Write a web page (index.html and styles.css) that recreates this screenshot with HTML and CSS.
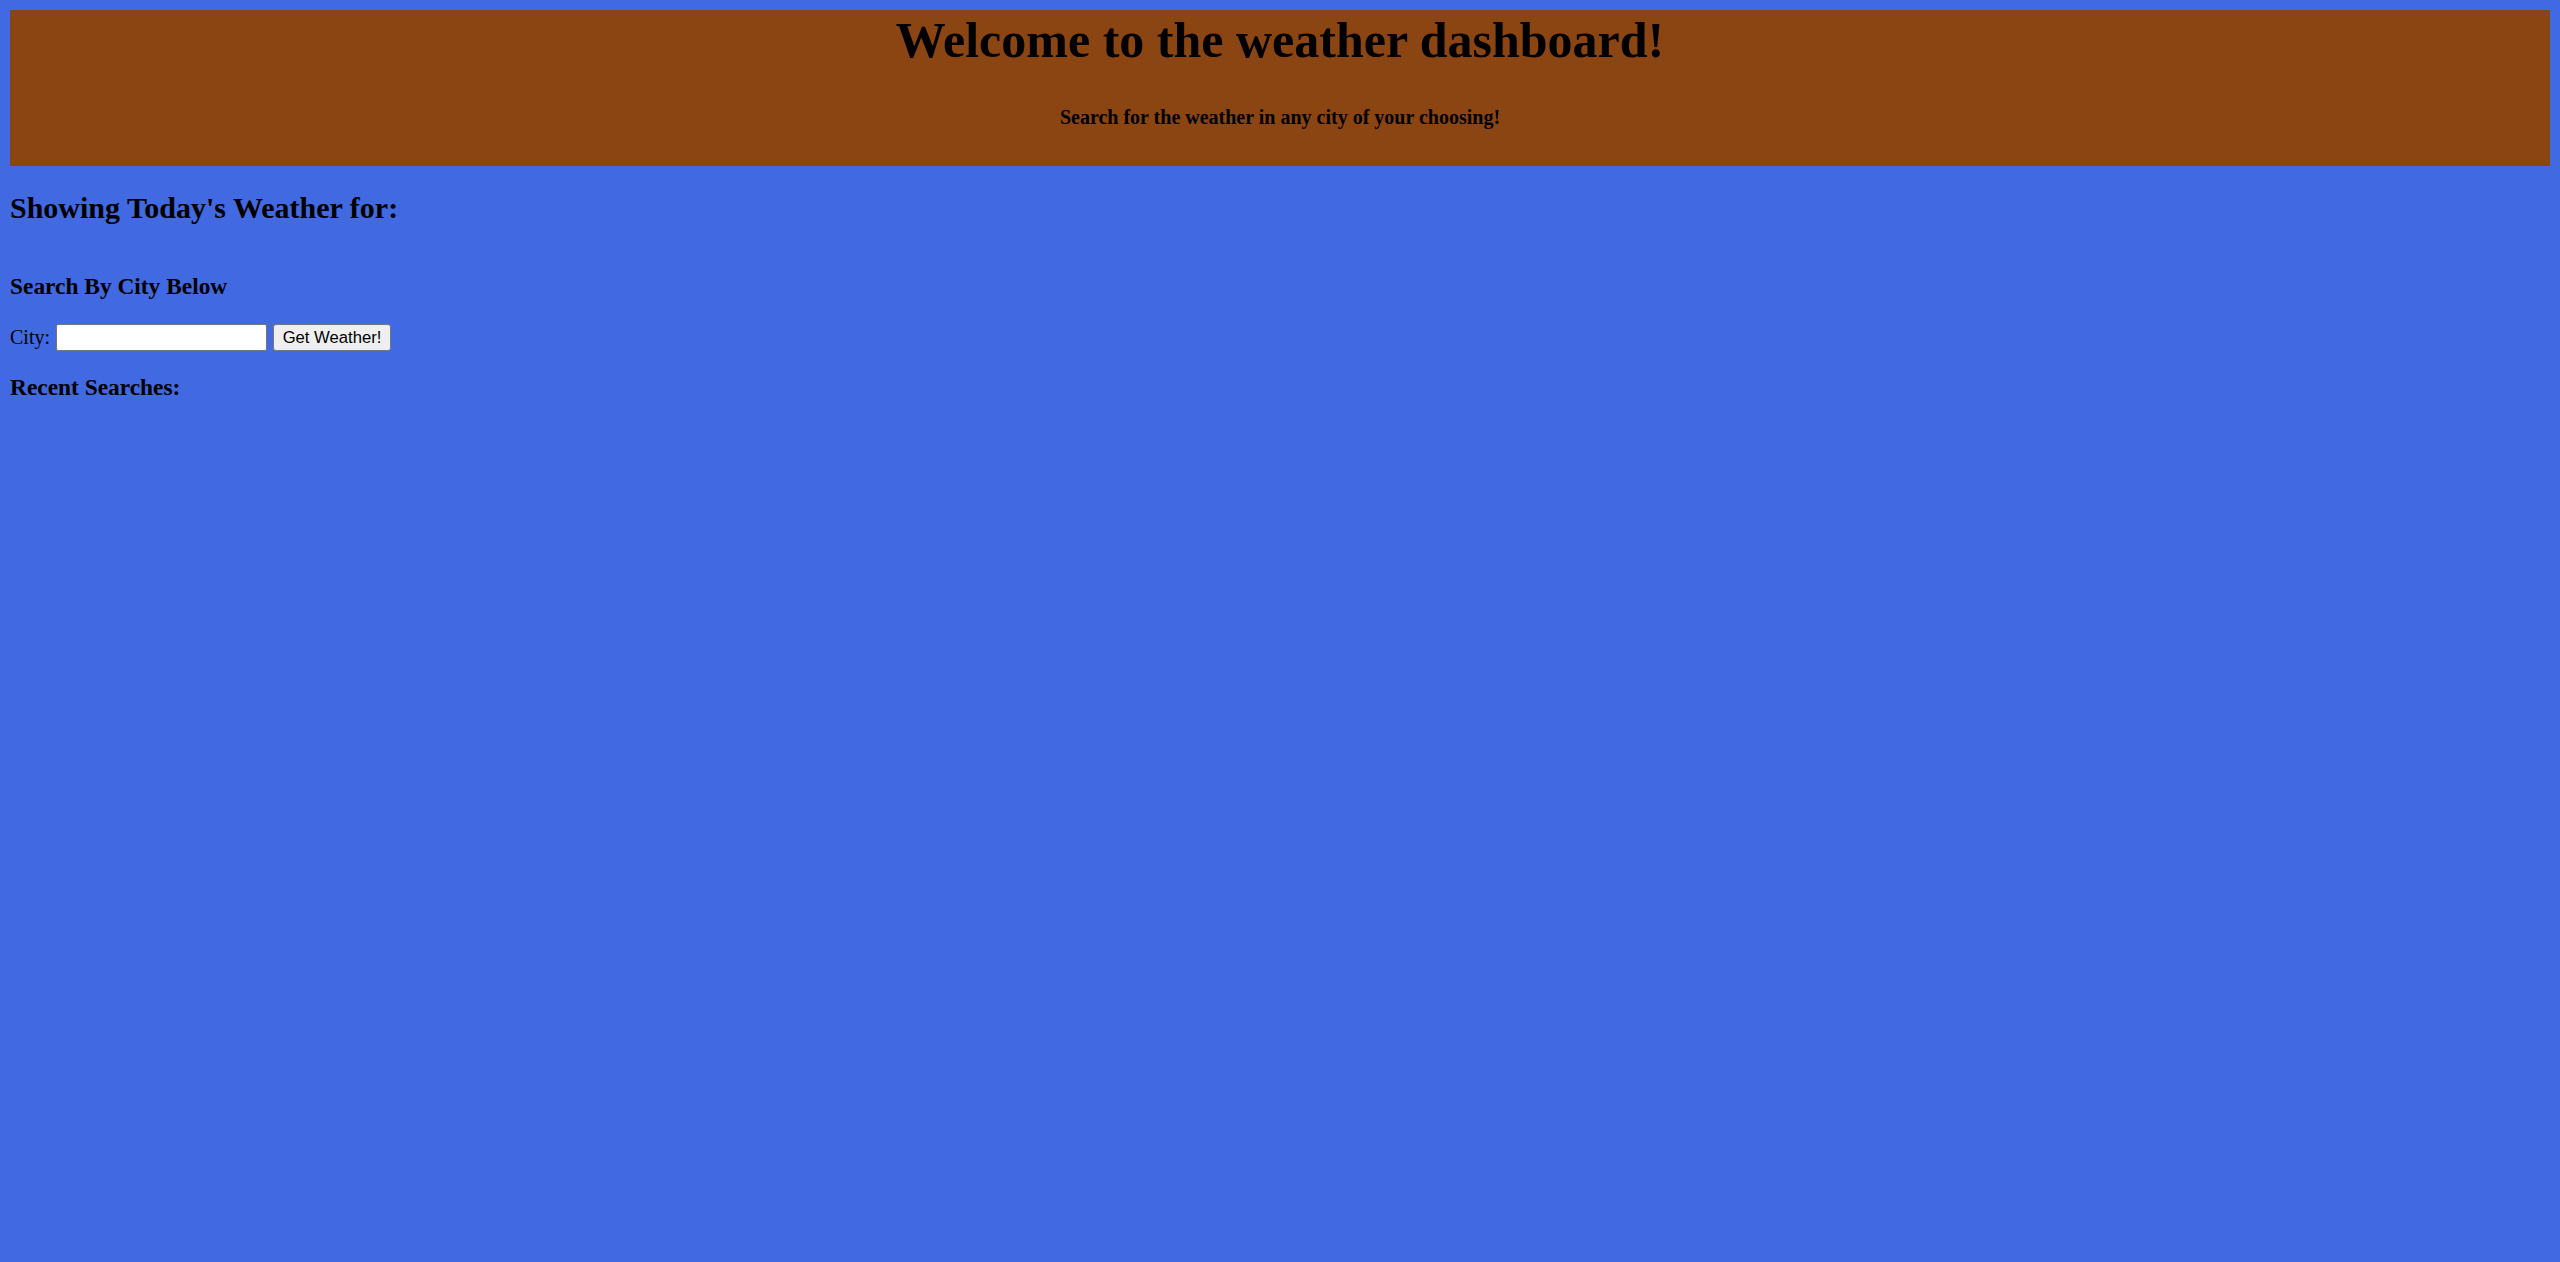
FILE: index.html
```html
<!DOCTYPE html>
<html lang="en">
<head>
<meta charset="utf-8">
<title>Weather Dashboard</title>
<link rel="stylesheet" href="styles.css">
</head>
<body>
<header class="banner">
  <h1 class="title">Welcome to the weather dashboard!</h1>
  <h4 class="subtitle">Search for the weather in any city of your choosing!</h4>
</header>
<main class="content">
  <h2 class="today">Showing Today's Weather for:</h2>
  <h3 class="section-title search-title">Search By City Below</h3>
  <form class="search-form">
    <label class="city-label" for="city">City:</label>
    <input class="city-input" id="city" type="text">
    <button class="get-btn" type="button">Get Weather!</button>
  </form>
  <h3 class="section-title recent-title">Recent Searches:</h3>
</main>
</body>
</html>
```

FILE: styles.css
```css
html, body {
  background: #4169E1;
}
body {
  margin: 10px;
  font-family: "Liberation Serif", "Times New Roman", serif;
  font-size: 20px;
  color: #000;
}
.banner {
  background: #8B4513;
  text-align: center;
  height: 156px;
  box-sizing: border-box;
  padding-top: 2px;
}
.title {
  margin: 0;
  font-size: 50px;
  line-height: 56px;
  font-weight: bold;
}
.subtitle {
  margin: 38px 0 0;
  font-size: 20px;
  line-height: 23px;
  font-weight: bold;
}
.content {
  display: flex;
  flex-direction: column;
  align-items: flex-start;
}
.today {
  margin: 25px 0 0;
  font-size: 30px;
  line-height: 34px;
  font-weight: bold;
}
.section-title {
  font-size: 23.4px;
  line-height: 27px;
  font-weight: bold;
}
.search-title {
  margin: 48px 0 0;
}
.search-form {
  margin: 24px 0 0;
  display: flex;
  align-items: center;
}
.city-label {
  font-size: 20px;
  line-height: 23px;
  margin-right: 6px;
}
.city-input {
  width: 211px;
  height: 27px;
  box-sizing: border-box;
  border: 1px solid #767676;
  border-radius: 2px;
  background: #fff;
  padding: 1px 3px;
  margin: 0 6px 0 0;
  font-family: "Liberation Sans", Arial, sans-serif;
  font-size: 16.67px;
}
.get-btn {
  width: 118px;
  height: 27px;
  box-sizing: border-box;
  border: 1px solid #767676;
  border-radius: 3px;
  background: #efefef;
  padding: 0 6px;
  margin: 0;
  font-family: "Liberation Sans", Arial, sans-serif;
  font-size: 16.67px;
  color: #000;
}
.recent-title {
  margin: 23px 0 0;
}
```
